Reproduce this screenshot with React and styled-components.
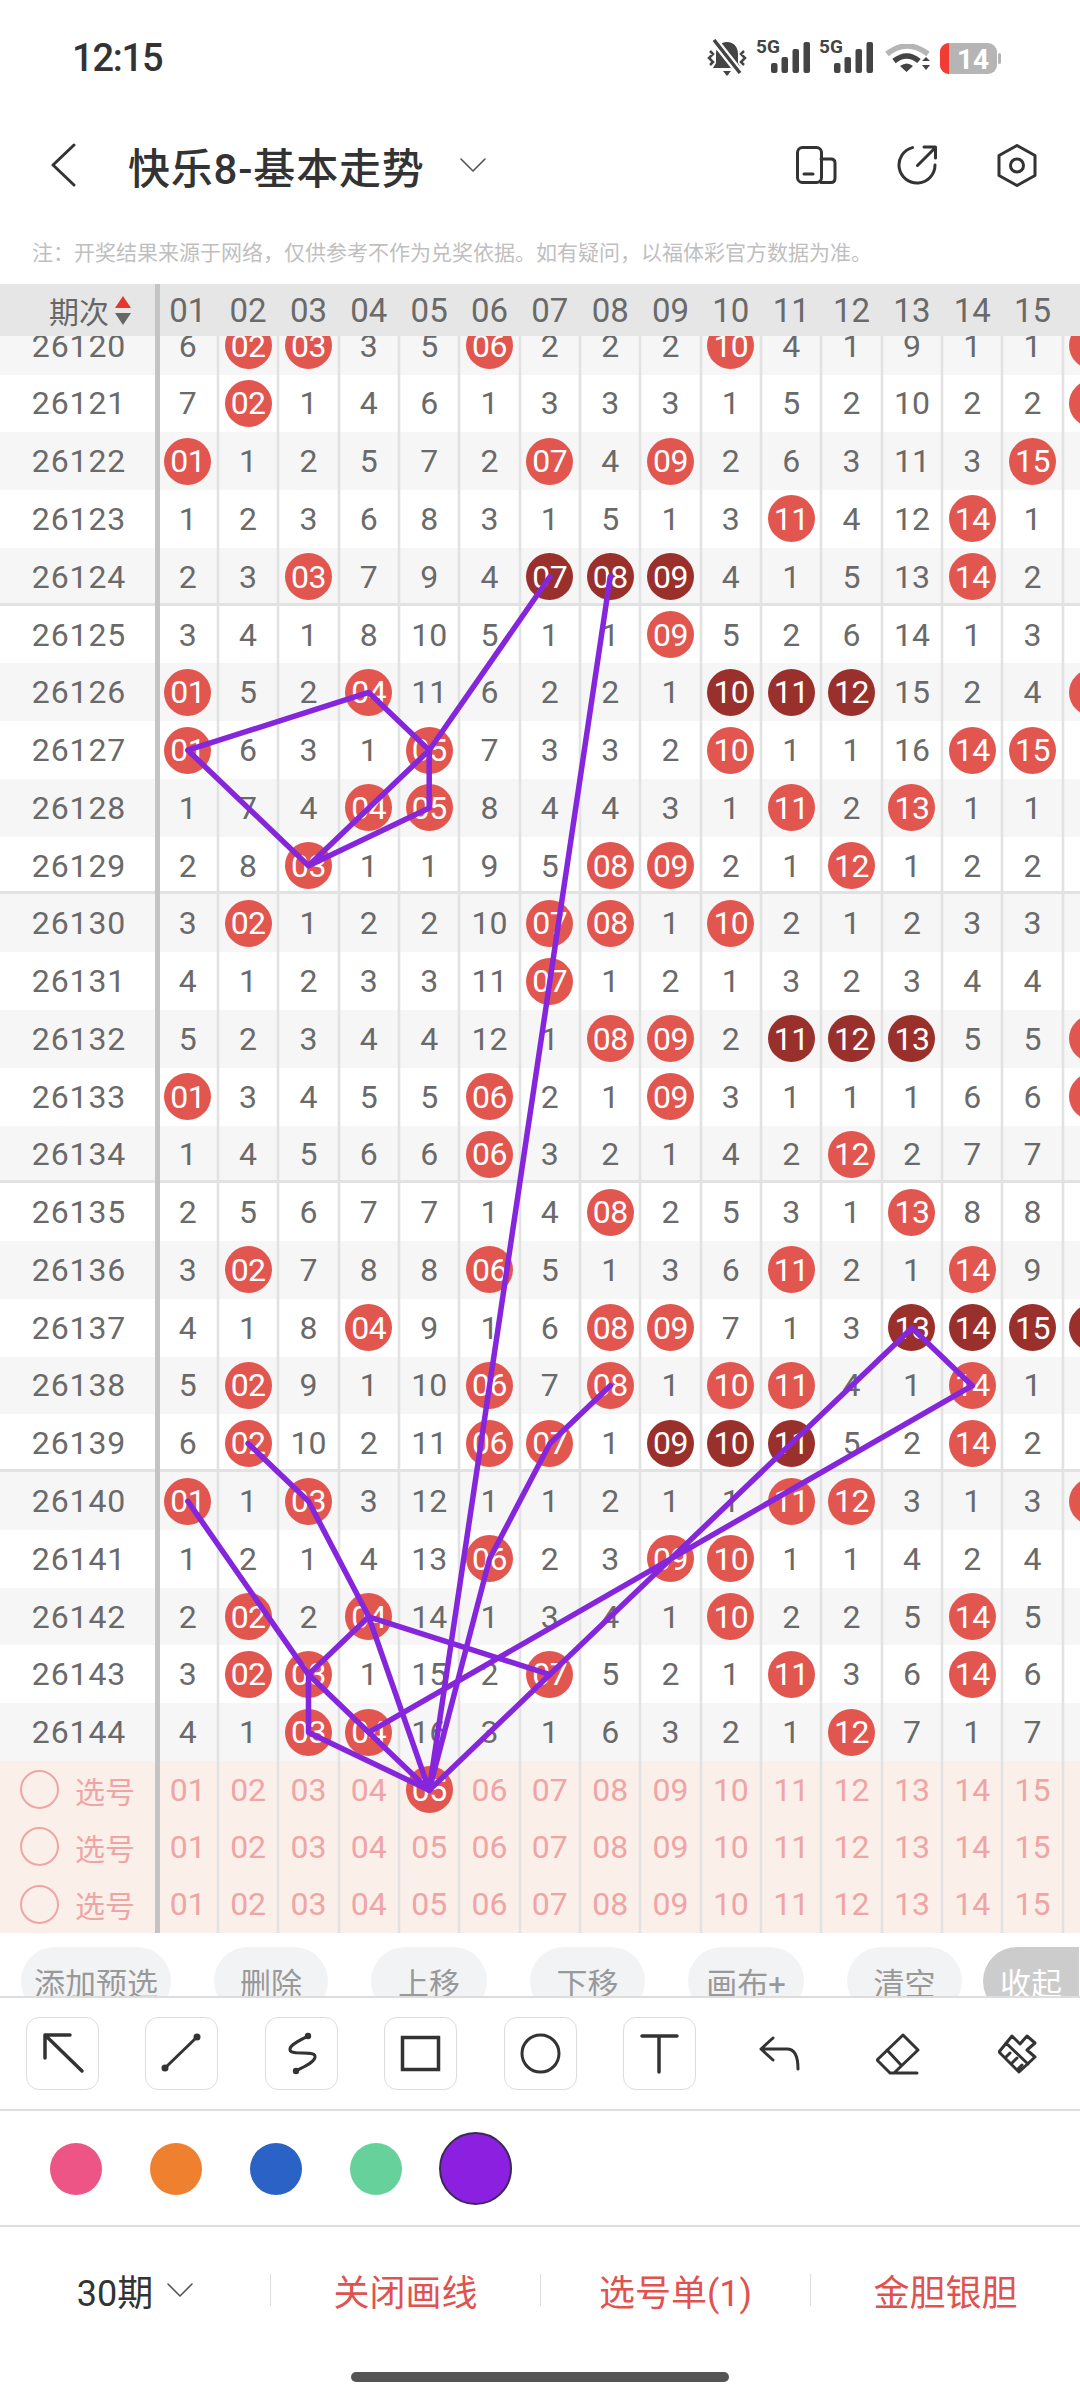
import React from 'react';
import styled, { createGlobalStyle } from 'styled-components';

const INK = '#333';
const RED = '#e25650';
const DARK = '#9a302b';
const PINK = '#efa5a5';
const LINE = '#e2e2e2';
const PURPLE = '#8526dc';

const FIRST_COL = 157.6;
const COL = 60.35;
const ROW = 57.78;
const TOP_SHIFT = 19.2;

const FIRST_ISSUE = 26120;

// r = red ball, d = dark ball, plain = miss count
const DRAWS = [
  '6 r02 r03 3 5 r06 2 2 2 r10 4 1 9 1 1 r16',
  '7 r02 1 4 6 1 3 3 3 1 5 2 10 2 2 r16',
  'r01 1 2 5 7 2 r07 4 r09 2 6 3 11 3 r15',
  '1 2 3 6 8 3 1 5 1 3 r11 4 12 r14 1',
  '2 3 r03 7 9 4 d07 d08 d09 4 1 5 13 r14 2',
  '3 4 1 8 10 5 1 1 r09 5 2 6 14 1 3',
  'r01 5 2 r04 11 6 2 2 1 d10 d11 d12 15 2 4 r16',
  'r01 6 3 1 r05 7 3 3 2 r10 1 1 16 r14 r15',
  '1 7 4 r04 r05 8 4 4 3 1 r11 2 r13 1 1',
  '2 8 r03 1 1 9 5 r08 r09 2 1 r12 1 2 2',
  '3 r02 1 2 2 10 r07 r08 1 r10 2 1 2 3 3',
  '4 1 2 3 3 11 r07 1 2 1 3 2 3 4 4',
  '5 2 3 4 4 12 1 r08 r09 2 d11 d12 d13 5 5 r16',
  'r01 3 4 5 5 r06 2 1 r09 3 1 1 1 6 6 r16',
  '1 4 5 6 6 r06 3 2 1 4 2 r12 2 7 7',
  '2 5 6 7 7 1 4 r08 2 5 3 1 r13 8 8',
  '3 r02 7 8 8 r06 5 1 3 6 r11 2 1 r14 9',
  '4 1 8 r04 9 1 6 r08 r09 7 1 3 d13 d14 d15 d16',
  '5 r02 9 1 10 r06 7 r08 1 r10 r11 4 1 r14 1',
  '6 r02 10 2 11 r06 r07 1 d09 d10 d11 5 2 r14 2',
  'r01 1 r03 3 12 1 1 2 1 1 r11 r12 3 1 3 r16',
  '1 2 1 4 13 r06 2 3 r09 r10 1 1 4 2 4',
  '2 r02 2 r04 14 1 3 4 1 r10 2 2 5 r14 5',
  '3 r02 r03 1 15 2 r07 5 2 1 r11 3 6 r14 6',
  '4 1 r03 r04 16 3 1 6 3 2 1 r12 7 1 7',
];

const NUMBERS = Array.from({ length: 15 }, (_, i) => String(i + 1).padStart(2, '0'));

// [column, issue]; issue 26145 is the first pick row
const STROKES = [
  [[7, 26124], [5, 26127], [3, 26129], [1, 26127], [4, 26126], [5, 26127], [5, 26128], [3, 26129]],
  [[8, 26124], [5, 26145]],
  [[8, 26138], [7, 26139], [6, 26141], [5, 26145]],
  [[2, 26139], [3, 26140], [4, 26142], [5, 26145]],
  [[1, 26140], [3, 26143], [4, 26142], [7, 26143], [5, 26145]],
  [[3, 26143], [3, 26144], [5, 26145]],
  [[3, 26143], [4, 26144], [5, 26145]],
  [[4, 26144], [14, 26138], [13, 26137], [7, 26143]],
];

const toPoint = ([col, issue]) => {
  const x = FIRST_COL + COL * (col - 0.5);
  const y = (issue - FIRST_ISSUE + 0.5) * ROW - TOP_SHIFT;
  return `${x.toFixed(1)},${y.toFixed(1)}`;
};

const GlobalStyle = createGlobalStyle`
  html, body {
    margin: 0;
    padding: 0;
    background: #fff;
  }
  * {
    box-sizing: border-box;
  }
`;

const Page = styled.div`
  width: 1080px;
  height: 2400px;
  overflow: hidden;
  background: #fff;
  font-family: Roboto, "Noto Sans CJK SC", sans-serif;
  color: ${INK};
  display: flex;
  flex-direction: column;
`;

const StatusBar = styled.div`
  height: 116px;
  flex: none;
  display: flex;
  align-items: center;
  padding: 0 79px 0 72px;
`;

const Clock = styled.div`
  font-size: 38px;
  font-weight: 500;
  letter-spacing: -1.2px;
  margin-right: auto;
`;

const StatusIcons = styled.div`
  display: flex;
  align-items: center;
  gap: 9px;
`;

const NavBar = styled.div`
  height: 98px;
  flex: none;
  display: flex;
  align-items: center;
  padding-left: 50px;
`;

const Title = styled.div`
  font-size: 42px;
  font-weight: 500;
  letter-spacing: 0.8px;
  margin: 0 36px 0 52px;
  width: 296px;
  white-space: nowrap;
`;

const NavActions = styled.div`
  margin-left: auto;
  display: flex;
  align-items: center;
  gap: 60px;
  padding-right: 43px;
`;

const Note = styled.div`
  height: 70px;
  flex: none;
  padding: 16px 0 0 32px;
  font-size: 21px;
  line-height: 46px;
  color: #bfbfbf;
  white-space: nowrap;
`;

const grid = `
  display: grid;
  grid-template-columns: ${FIRST_COL}px repeat(16, ${COL}px);
  width: ${FIRST_COL + COL * 16}px;
`;

const HeadRow = styled.div`
  ${grid}
  height: 52px;
  flex: none;
  background: #e6e6e6;
  position: relative;
  z-index: 2;
`;

const HeadFirst = styled.div`
  margin-right: -2.4px;
  border-right: 5px solid #c4c4c4;
  display: flex;
  align-items: center;
  justify-content: flex-end;
  padding-right: 24px;
  font-size: 30px;
  color: #666;
`;

const SortMark = styled.div`
  display: flex;
  flex-direction: column;
  gap: 5px;
  margin-left: 6px;
`;

const Triangle = styled.div`
  width: 0;
  height: 0;
  border-left: 8px solid transparent;
  border-right: 8px solid transparent;
  ${({ $down }) => ($down ? 'border-top: 12px solid #666;' : 'border-bottom: 12px solid #e5372b;')}
`;

const HeadCell = styled.div`
  display: flex;
  align-items: center;
  justify-content: center;
  font-size: 33px;
  color: #6a6a6a;
`;

const TableWrap = styled.div`
  position: relative;
  height: 1597.4px;
  flex: none;
  overflow: hidden;
`;

const TableBody = styled.div`
  margin-top: -${TOP_SHIFT}px;
`;

const Row = styled.div`
  ${grid}
  height: ${ROW}px;
  background: ${({ $alt }) => ($alt ? '#f6f6f6' : '#fff')};
  ${({ $rule }) => $rule && `box-shadow: inset 0 -3px 0 ${LINE};`}
`;

const Issue = styled.div`
  margin-right: -2.4px;
  padding-left: 3px;
  border-right: 5px solid #c4c4c4;
  display: flex;
  align-items: center;
  justify-content: center;
  font-size: 32px;
  letter-spacing: 0.9px;
  color: #6a6a6a;
`;

const Cell = styled.div`
  display: flex;
  align-items: center;
  justify-content: center;
  font-size: 32px;
  color: #6a6a6a;
  box-shadow: inset -1.3px 0 0 ${LINE}, 1.3px 0 0 ${LINE};
`;

const Ball = styled.div`
  width: 47px;
  height: 47px;
  border-radius: 50%;
  flex: none;
  display: flex;
  align-items: center;
  justify-content: center;
  font-size: 32px;
  letter-spacing: -0.5px;
  color: #fff;
  background: ${({ $dark }) => ($dark ? DARK : RED)};
`;

const PickRow = styled.div`
  ${grid}
  height: 57.3px;
  background: #fbefea;
`;

const PickLabel = styled.div`
  margin-right: -2.4px;
  border-right: 5px solid #c4c4c4;
  display: flex;
  align-items: center;
  padding-left: 20px;
  gap: 16px;
  font-size: 30px;
  color: ${PINK};
`;

const PickCircle = styled.div`
  width: 39px;
  height: 39px;
  border-radius: 50%;
  border: 2px solid ${PINK};
`;

const PickCell = styled(Cell)`
  color: ${PINK};
`;

const Overlay = styled.svg`
  position: absolute;
  left: 0;
  top: 0;
  pointer-events: none;
`;

const PillBar = styled.div`
  height: 63px;
  flex: none;
  overflow: hidden;
  display: flex;
  gap: 43px;
  padding: 14px 0 0 21px;
`;

const Pill = styled.div`
  width: ${({ $w }) => $w}px;
  height: 68px;
  flex: none;
  border-radius: ${({ $on }) => ($on ? '34px 0 0 34px' : '34px')};
  display: flex;
  align-items: center;
  justify-content: center;
  white-space: nowrap;
  font-size: 31px;
  color: ${({ $on }) => ($on ? '#fff' : '#999')};
  background: ${({ $on }) => ($on ? '#ccc' : '#f2f3f5')};
  ${({ $on }) => $on && 'margin-left: -22px;'}
`;

const ToolBar = styled.div`
  height: 115px;
  flex: none;
  border-top: 2px solid #ddd;
  border-bottom: 2px solid #ddd;
  display: flex;
  align-items: center;
  padding-left: 26px;
`;

const ToolBox = styled.div`
  width: 73px;
  height: 73px;
  flex: none;
  margin-right: 46.4px;
  border: 1px solid #ddd;
  border-radius: 13px;
`;

const ToolIcon = styled.svg`
  display: block;
  position: relative;
  margin: -1px;
`;

const PlainTool = styled.svg`
  flex: none;
  margin-left: ${({ $gap }) => $gap}px;
`;

const ColorBar = styled.div`
  height: 116px;
  flex: none;
  border-bottom: 2px solid #ddd;
  display: flex;
  align-items: center;
  padding: 1px 0 0 50px;
  gap: 48px;
`;

const Swatch = styled.div`
  width: 52px;
  height: 52px;
  border-radius: 50%;
  background: ${({ $color }) => $color};
`;

const BigSwatch = styled.div`
  width: 73px;
  height: 73px;
  margin-left: -11px;
  border-radius: 50%;
  border: 2px solid #3a2a55;
  background: #8b20e0;
`;

const BottomBar = styled.div`
  height: 126px;
  flex: none;
  display: grid;
  grid-template-columns: repeat(4, 270px);
  align-items: center;
`;

const BottomCell = styled.div`
  height: 32px;
  display: flex;
  align-items: center;
  justify-content: center;
  gap: 14px;
  font-size: 36px;
  color: ${({ $red }) => ($red ? '#e0524f' : INK)};
  ${({ $rule }) => $rule && 'border-left: 1px solid #ddd;'}
`;

const HomeBar = styled.div`
  width: 378px;
  height: 10px;
  margin: 19px auto 0;
  border-radius: 5px;
  background: #555;
`;

const Signal = () => (
  <svg width="54" height="48" viewBox="0 -4 54 48">
    <text x="0" y="15" fontFamily="Roboto, sans-serif" fontWeight="700" fontSize="19" fill="#444">5G</text>
    <rect x="15" y="25" width="6.500" height="10" rx="2" fill="#444" />
    <rect x="25.500" y="19" width="6.500" height="16" rx="2" fill="#444" />
    <rect x="36.500" y="11" width="6.500" height="24" rx="2" fill="#444" />
    <rect x="47.500" y="4" width="6.500" height="31" rx="2" fill="#444" />
  </svg>
);

const StatusGlyphs = () => (
  <StatusIcons>
    <svg width="40" height="38" viewBox="0 0 40 38">
      <path d="M20 3c-7 0-11 5-11 12v9l-3 5h28l-3-5v-9C31 8 27 3 20 3z" fill="#444" />
      <path d="M16 32h8l-4 5z" fill="#444" />
      <path d="M7 1l26 33" stroke="#fff" strokeWidth="8" />
      <path d="M7 1l26 33" stroke="#444" strokeWidth="3.5" />
      <path d="M3 12l3 3-4 4 4 4-3 3M37 12l-3 3 4 4-4 4 3 3" stroke="#444" strokeWidth="2.5" fill="none" />
    </svg>
    <Signal />
    <Signal />
    <svg width="46" height="28" viewBox="0 0 46 28" style={{ marginLeft: 3 }}>
      <path d="M2 10Q22-6 43 10" stroke="#b5b5b5" strokeWidth="5.5" fill="none" />
      <path d="M9 17Q22 7 34 17" stroke="#444" strokeWidth="5.5" fill="none" />
      <path d="M15 22Q22 17 28 22L21.500 28z" fill="#444" />
      <path d="M37 17l4-4 4 4zM37 21l4 5 4-5z" fill="#444" />
    </svg>
    <svg width="61" height="37" viewBox="0 -3 61 37">
      <rect x="0" y="0" width="57" height="31" rx="9" fill="#b5b5b5" />
      <path d="M9 0a9 9 0 0 0-9 9v13a9 9 0 0 0 9 9z" fill="#f23c33" />
      <rect x="58" y="10" width="3" height="11" rx="1.500" fill="#b5b5b5" />
      <text x="33" y="26" textAnchor="middle" fontFamily="Roboto, sans-serif" fontWeight="700" fontSize="28" fill="#fff">14</text>
    </svg>
  </StatusIcons>
);

const stroke = { stroke: INK, fill: 'none', strokeLinecap: 'round', strokeLinejoin: 'round' };

const Tool = ({ children }) => (
  <ToolBox>
    <ToolIcon width="73" height="73" viewBox="0 0 73 73">{children}</ToolIcon>
  </ToolBox>
);

const Tools = () => (
  <ToolBar>
    <Tool>
      <path d="M44 18H19V41M19 18L56 54" {...stroke} strokeWidth="3.500" />
    </Tool>
    <Tool>
      <path d="M52 20L20 51" {...stroke} strokeWidth="3" />
      <circle cx="52" cy="20" r="3.500" fill={INK} />
      <circle cx="20" cy="51" r="3.500" fill={INK} />
    </Tool>
    <Tool>
      <path d="M43 19C34 24 24 28 25 33C26 39 49 33 50 39C51 45 38 50 31 54" {...stroke} strokeWidth="3" />
      <circle cx="43" cy="19" r="3.200" fill={INK} />
      <circle cx="31" cy="54" r="3.200" fill={INK} />
    </Tool>
    <Tool>
      <rect x="18.500" y="20.500" width="36" height="32" stroke={INK} fill="none" strokeWidth="3.500" />
    </Tool>
    <Tool>
      <circle cx="36.500" cy="36.500" r="18.500" {...stroke} strokeWidth="3" />
    </Tool>
    <Tool>
      <path d="M19 19H54M36 19V55" {...stroke} strokeWidth="3.500" />
    </Tool>
    <PlainTool $gap="17" width="42" height="36" viewBox="0 0 42 36">
      <path d="M14 2L2 13L14 24M2 13H28C35 13 39 19 39 33" {...stroke} strokeWidth="3" />
    </PlainTool>
    <PlainTool $gap="75" width="44" height="44" viewBox="0 0 44 44">
      <path d="M27 3L42 18L18 41H14L1 28zM11 18L25 33M14 41H41" {...stroke} strokeWidth="3" />
    </PlainTool>
    <PlainTool $gap="78" width="40" height="40" viewBox="0 0 40 40">
      <path d="M14 2L22 10L29 2L37 9L29 16L37 23L21 38L1 18zM8 9L30 30M7 24L12 19M13 30L19 24M20 35L24 31" {...stroke} strokeWidth="3" />
    </PlainTool>
  </ToolBar>
);

const Chevron = () => (
  <svg width="26" height="14" viewBox="0 0 26 14">
    <path d="M1 1L13 13L25 1" fill="none" stroke="#555" strokeWidth="1.600" strokeLinecap="round" strokeLinejoin="round" />
  </svg>
);

// the 16th column only peeks in at the screen edge, its number is out of sight
const parseCell = (token, col) => {
  const label = col === 15 ? '' : token.slice(1);
  if (token[0] === 'r') return <Ball>{label}</Ball>;
  if (token[0] === 'd') return <Ball $dark>{label}</Ball>;
  return token;
};

const App = () => (
  <Page>
    <GlobalStyle />
    <StatusBar>
      <Clock>12:15</Clock>
      <StatusGlyphs />
    </StatusBar>
    <NavBar>
      <svg width="26" height="44" viewBox="0 0 26 44">
        <path d="M24 2L3 22L24 42" {...stroke} strokeWidth="3" />
      </svg>
      <Title>快乐8-基本走势</Title>
      <Chevron />
      <NavActions>
        <svg width="41" height="38" viewBox="0 0 41 38">
          <rect x="1.500" y="1.500" width="24" height="35" rx="5" {...stroke} strokeWidth="3" />
          <path d="M25 13H35C37.500 13 39 14.500 39 17V32C39 35 37.500 36.500 35 36.500H25M8 28H17" {...stroke} strokeWidth="3" />
        </svg>
        <svg width="40" height="40" viewBox="0 0 40 40">
          <path d="M15.500 2.600A18 18 0 1 0 38 20M20.500 20.500L38 3M27 2H38.500V13" {...stroke} strokeWidth="3" />
        </svg>
        <svg width="40" height="43" viewBox="0 0 40 43">
          <path d="M20 1.500L38 11.500V31.500L20 41.500L2 31.500V11.500z" {...stroke} strokeWidth="3" />
          <circle cx="20" cy="21.500" r="6.500" {...stroke} strokeWidth="3" />
        </svg>
      </NavActions>
    </NavBar>
    <Note>注：开奖结果来源于网络，仅供参考不作为兑奖依据。如有疑问，以福体彩官方数据为准。</Note>
    <HeadRow>
      <HeadFirst>
        期次
        <SortMark>
          <Triangle />
          <Triangle $down />
        </SortMark>
      </HeadFirst>
      {NUMBERS.map((n) => <HeadCell key={n}>{n}</HeadCell>)}
    </HeadRow>
    <TableWrap>
      <TableBody>
        {DRAWS.map((draw, i) => {
          const cells = draw.split(' ');
          const issue = FIRST_ISSUE + i;
          return (
            <Row key={issue} $alt={i % 2 === 0} $rule={issue % 5 === 4 && i < 24}>
              <Issue>{issue}</Issue>
              {cells.map((c, j) => <Cell key={j}>{parseCell(c, j)}</Cell>)}
            </Row>
          );
        })}
        {[0, 1, 2].map((r) => (
          <PickRow key={r}>
            <PickLabel>
              <PickCircle />
              选号
            </PickLabel>
            {NUMBERS.map((n) => (
              <PickCell key={n}>{r === 0 && n === '05' ? <Ball>{n}</Ball> : n}</PickCell>
            ))}
          </PickRow>
        ))}
      </TableBody>
      <Overlay width="1080" height="1598" viewBox="0 0 1080 1598">
        {STROKES.map((line, i) => (
          <polyline
            key={i}
            points={line.map(toPoint).join(' ')}
            fill="none"
            stroke={PURPLE}
            strokeWidth="5.5"
            strokeLinejoin="round"
            strokeLinecap="round"
          />
        ))}
      </Overlay>
    </TableWrap>
    <PillBar>
      <Pill $w={150}>添加预选</Pill>
      <Pill $w={114}>删除</Pill>
      <Pill $w={116}>上移</Pill>
      <Pill $w={115}>下移</Pill>
      <Pill $w={116}>画布+</Pill>
      <Pill $w={115}>清空</Pill>
      <Pill $w={96} $on>收起</Pill>
    </PillBar>
    <Tools />
    <ColorBar>
      <Swatch $color="#ec5585" />
      <Swatch $color="#ef8030" />
      <Swatch $color="#2a63c5" />
      <Swatch $color="#66d19a" />
      <BigSwatch />
    </ColorBar>
    <BottomBar>
      <BottomCell>
        30期
        <Chevron />
      </BottomCell>
      <BottomCell $red $rule>关闭画线</BottomCell>
      <BottomCell $red $rule>选号单(1)</BottomCell>
      <BottomCell $red $rule>金胆银胆</BottomCell>
    </BottomBar>
    <HomeBar />
  </Page>
);

export default App;
